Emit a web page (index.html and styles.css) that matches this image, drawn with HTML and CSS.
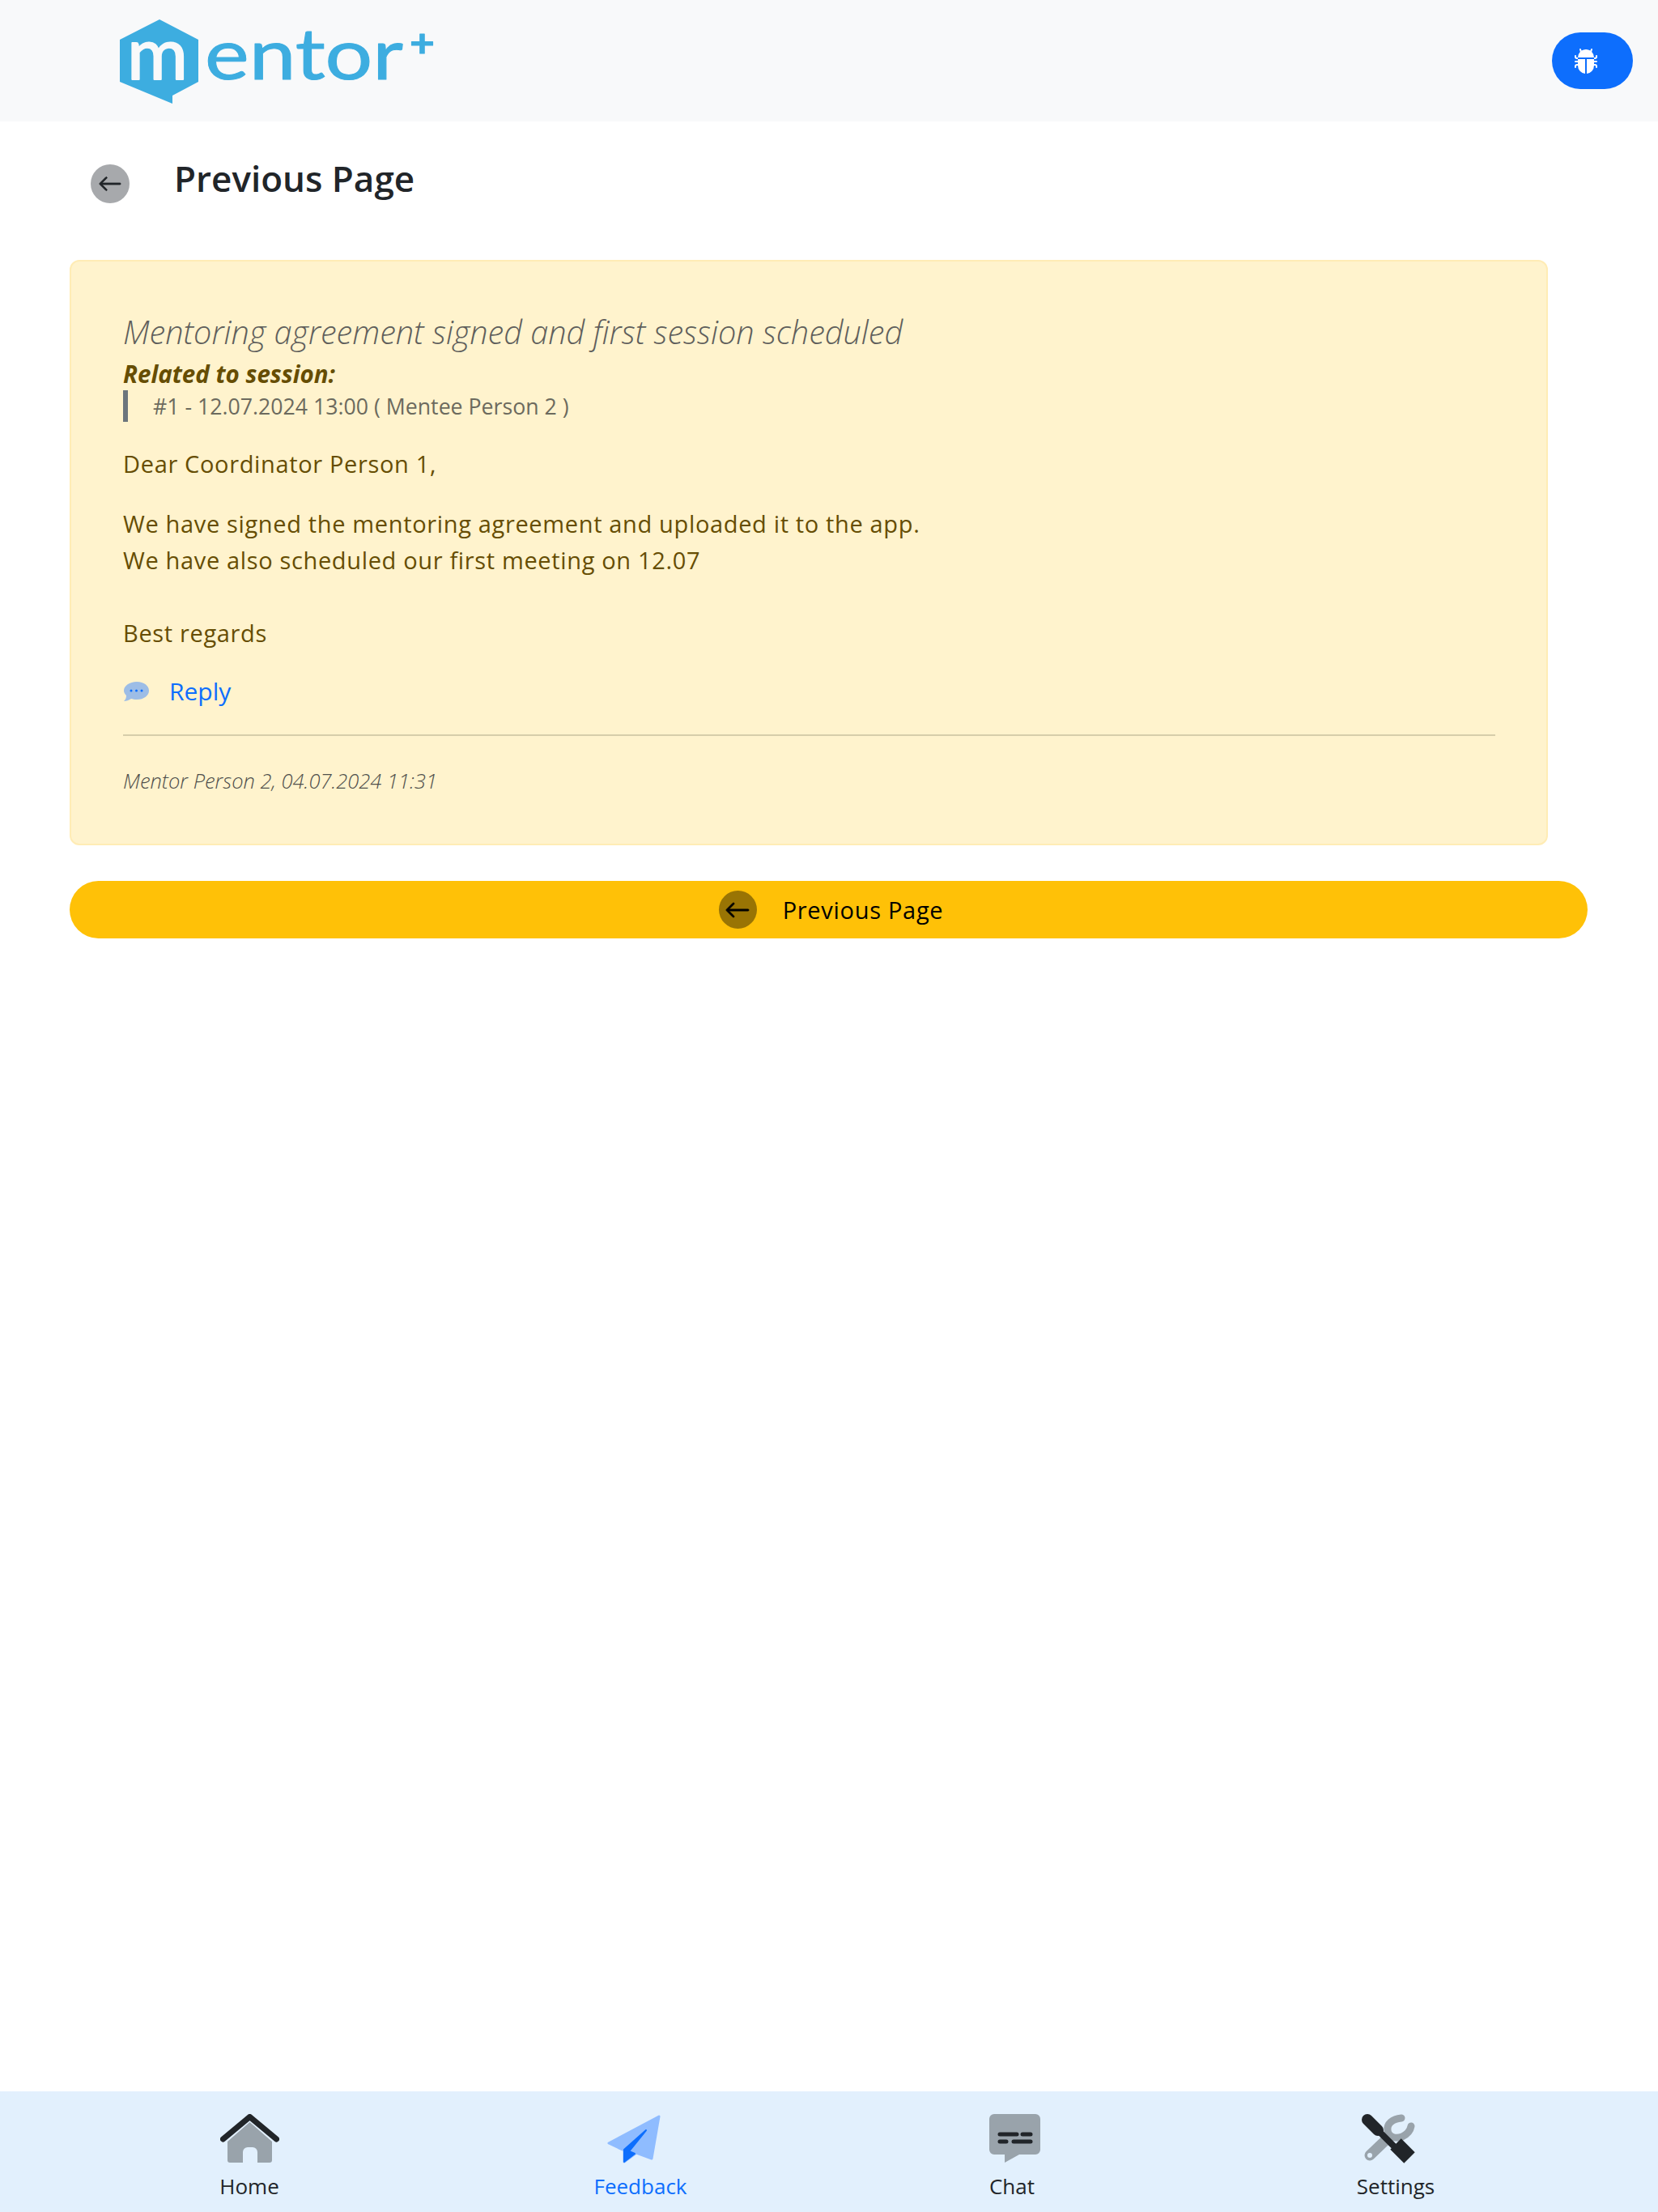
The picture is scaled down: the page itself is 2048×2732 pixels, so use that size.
FILE: index.html
```html
<!DOCTYPE html>
<html lang="en">
<head>
    <meta charset="UTF-8">
    <title>Mentor+ Feedback</title>
    <link rel="stylesheet" href="styles.css">
</head>
<body>

<header class="top-bar">
    <svg class="logo" viewBox="0 0 388 105" width="388" height="105">
        <path class="logo-hex" d="M49 1 L0 26 V78 L65 105 V95 L97 78 V26 Z"/>
        <text class="logo-m" x="9" y="75" textLength="75" lengthAdjust="spacingAndGlyphs">m</text>
        <text class="logo-word" x="105" y="75" textLength="245" lengthAdjust="spacingAndGlyphs">entor</text>
        <text class="logo-plus" x="358" y="47" textLength="31" lengthAdjust="spacingAndGlyphs">+</text>
    </svg>
    <button class="bug-button">
        <svg viewBox="0 0 16 16" width="32" height="32" fill="#fff">
            <path d="M4.978.855a.5.5 0 1 0-.956.29l.41 1.352A4.985 4.985 0 0 0 3 6h10a4.985 4.985 0 0 0-1.432-3.503l.41-1.352a.5.5 0 1 0-.956-.29l-.291.956A4.978 4.978 0 0 0 8 1a4.979 4.979 0 0 0-2.731.811l-.29-.956z"/>
            <path d="M13 6v1H8.5v8.975A5 5 0 0 0 13 11h.5a.5.5 0 0 1 .5.5v.5a.5.5 0 1 0 1 0v-.5a1.5 1.5 0 0 0-1.5-1.5H13V9h1.5a.5.5 0 0 0 0-1H13V7h.5A1.5 1.5 0 0 0 15 5.5V5a.5.5 0 0 0-1 0v.5a.5.5 0 0 1-.5.5H13zm-5.5 9.975V7H3V6h-.5a.5.5 0 0 1-.5-.5V5a.5.5 0 0 0-1 0v.5A1.5 1.5 0 0 0 2.5 7H3v1H1.5a.5.5 0 0 0 0 1H3v1h-.5A1.5 1.5 0 0 0 1 11.5v.5a.5.5 0 1 0 1 0v-.5a.5.5 0 0 1 .5-.5H3a5 5 0 0 0 4.5 4.975z"/>
        </svg>
    </button>
</header>

<main class="page">
    <div class="back-row">
        <span class="back-circle">
            <svg viewBox="0 0 16 16" width="30" height="30" fill="#212529">
                <path d="M15 8a.5.5 0 0 0-.5-.5H2.707l3.147-3.146a.5.5 0 1 0-.708-.708l-4 4a.5.5 0 0 0 0 .708l4 4a.5.5 0 0 0 .708-.708L2.707 8.5H14.5A.5.5 0 0 0 15 8z" stroke="#212529" stroke-width="0.5"/>
            </svg>
        </span>
        <h1 class="back-title">Previous Page</h1>
    </div>

    <section class="message-card">
        <h2 class="message-title">Mentoring agreement signed and first session scheduled</h2>
        <div class="related-label">Related to session:</div>
        <div class="related-quote">#1 - 12.07.2024 13:00 ( Mentee Person 2 )</div>
        <p class="message-text">Dear Coordinator Person 1,</p>
        <p class="message-text">We have signed the mentoring agreement and uploaded it to the app.<br>We have also scheduled our first meeting on 12.07<br><br>Best regards</p>
        <div class="reply-row">
            <svg viewBox="0 0 32 26" width="32" height="26">
                <path d="M17 1 C26 1 32 6 32 12 C32 18 26 23 17 23 C14 23 12 22.500 10 22 C7 24 4 25 1 25 C3 23 4 21 4 18 C2 16 1 14 1 12 C1 6 8 1 17 1 Z" fill="#9dbde6"/>
                <circle cx="10" cy="12" r="1.500" fill="#0d6efd"/>
                <circle cx="16.500" cy="12" r="1.500" fill="#0d6efd"/>
                <circle cx="23" cy="12" r="1.500" fill="#0d6efd"/>
            </svg>
            <a class="reply-link">Reply</a>
        </div>
        <hr class="message-rule">
        <div class="message-meta">Mentor Person 2, 04.07.2024 11:31</div>
    </section>

    <button class="previous-button">
        <span class="previous-circle">
            <svg viewBox="0 0 16 16" width="32" height="32" fill="#000">
                <path d="M15 8a.5.5 0 0 0-.5-.5H2.707l3.147-3.146a.5.5 0 1 0-.708-.708l-4 4a.5.5 0 0 0 0 .708l4 4a.5.5 0 0 0 .708-.708L2.707 8.5H14.5A.5.5 0 0 0 15 8z" stroke="#000" stroke-width="0.5"/>
            </svg>
        </span>
        <span>Previous Page</span>
    </button>
</main>

<nav class="bottom-nav">
    <div class="nav-item">
        <svg viewBox="0 0 73 61" width="73" height="61">
            <path d="M9 34 L36.500 10 L64 34 V57 a3 3 0 0 1-3 3 H46 V47 a6 6 0 0 0-6-6 h-6 a6 6 0 0 0-6 6 V60 H12 a3 3 0 0 1-3-3 Z" fill="#99a3ab"/>
            <path d="M3.500 31 L36.500 3.500 L69.500 31" fill="none" stroke="#212529" stroke-width="7" stroke-linecap="round" stroke-linejoin="round"/>
        </svg>
        <span>Home</span>
    </div>
    <div class="nav-item nav-active">
        <svg class="icon-left" viewBox="0 0 66 61" width="66" height="61">
            <path d="M64 3 L2 36 L21 45 V59 L36 48 L55 55 Z" fill="#8fbcff" stroke="#8fbcff" stroke-width="3" stroke-linejoin="round"/>
            <path d="M48 20 L21 44 V59 L34 49 L27 46 Z" fill="#0d6efd" stroke="#0d6efd" stroke-width="2" stroke-linejoin="round"/>
        </svg>
        <span>Feedback</span>
    </div>
    <div class="nav-item">
        <svg class="icon-right" viewBox="0 0 65 61" width="65" height="61">
            <path d="M7 0 H58 a6 6 0 0 1 6 6 V44 a6 6 0 0 1-6 6 H38 L20 60 V50 H7 a6 6 0 0 1-6-6 V6 a6 6 0 0 1 6-6 Z" fill="#99a3ab"/>
            <path d="M14 25 H35 M42 25 H52 M14 34 H22 M31 34 H52" fill="none" stroke="#212529" stroke-width="5" stroke-linecap="round"/>
        </svg>
        <span>Chat</span>
    </div>
    <div class="nav-item">
        <svg class="icon-left" viewBox="0 0 68 61" width="68" height="61">
            <path d="M49 5 C38 6 31 12 32 20 C33 29 42 31 50 28 C56 25 60 21 61 15" fill="none" stroke="#99a3ab" stroke-width="9" stroke-linecap="round"/>
            <path d="M32 30 L10 51" fill="none" stroke="#99a3ab" stroke-width="13" stroke-linecap="round"/>
            <circle cx="10" cy="51" r="3" fill="#e2f0fd"/>
            <path d="M7 7 L20 20" fill="none" stroke="#212529" stroke-width="14" stroke-linecap="round"/>
            <path d="M18 18 L42 42" fill="none" stroke="#212529" stroke-width="8"/>
            <path d="M42 37 L59 54" fill="none" stroke="#212529" stroke-width="19" stroke-linejoin="round"/>
        </svg>
        <span>Settings</span>
    </div>
</nav>

</body>
</html>
```

FILE: styles.css
```css
* {
    box-sizing: border-box;
    margin: 0;
    padding: 0;
}

html, body {
    height: 100%;
    overflow: hidden;
}

body {
    display: flex;
    flex-direction: column;
    height: 100vh;
    font-family: 'Open Sans', 'Noto Sans', sans-serif;
    background: #fff;
    color: #212529;
}

/* Header */
.top-bar {
    display: flex;
    justify-content: space-between;
    align-items: center;
    height: 150px;
    padding: 0 31px 0 148px;
    background-color: #f8f9fa;
}

.logo {
    overflow: visible;
}

.logo-hex {
    fill: #3dade0;
}

.logo-m, .logo-word, .logo-plus {
    font-family: 'Lato', sans-serif;
    stroke-linejoin: round;
}

.logo-m {
    font-size: 90px;
    fill: #f8f9fa;
    stroke: #f8f9fa;
    stroke-width: 2px;
}

.logo-word {
    font-size: 88px;
    fill: #3dade0;
    stroke: #3dade0;
    stroke-width: 1px;
}

.logo-plus {
    font-size: 48px;
    font-weight: 700;
    fill: #3dade0;
    stroke: #3dade0;
    stroke-width: 1px;
}

.bug-button {
    display: flex;
    align-items: center;
    width: 100px;
    height: 70px;
    padding-left: 26px;
    border: none;
    border-radius: 35px;
    background-color: #0d6efd;
}

/* Page body */
.page {
    flex: 1;
    padding: 53px 87px 0 86px;
}

.back-row {
    display: flex;
    align-items: center;
    gap: 55px;
    height: 48px;
    padding-left: 26px;
    margin-bottom: 70px;
}

.back-circle {
    display: flex;
    justify-content: center;
    align-items: center;
    width: 48px;
    height: 48px;
    border-radius: 50%;
    background-color: #a7a9ac;
}

.back-title {
    margin-bottom: 14px;
    font-size: 44px;
    font-weight: 600;
    line-height: 48px;
}

.message-card {
    width: 1826px;
    padding: 64px 63px 59px 64px;
    border: 2px solid #ffecb5;
    border-radius: 12px;
    background-color: #fff3cd;
    color: #664d03;
}

.message-title {
    font-size: 39.7px;
    font-weight: 300;
    font-style: italic;
    line-height: 46px;
    color: #5f5f5c;
}

.related-label {
    margin-top: 10px;
    margin-bottom: 1px;
    font-size: 29.5px;
    font-weight: 700;
    font-style: italic;
    line-height: 38px;
}

.related-quote {
    padding-left: 31px;
    border-left: 6px solid #6c757d;
    font-size: 26.7px;
    line-height: 39px;
    color: #6c6a5e;
}

.message-text {
    margin-top: 29px;
    font-size: 29px;
    letter-spacing: 0.65px;
    line-height: 45px;
}

.reply-row {
    display: flex;
    align-items: center;
    gap: 25px;
    height: 45px;
    margin-top: 27px;
}

.reply-link {
    font-size: 30px;
    color: #0d6efd;
}

.message-rule {
    margin: 31px 0 36px;
    border: none;
    border-top: 2px solid #d6cdaa;
}

.message-meta {
    font-size: 25.5px;
    font-style: italic;
    font-weight: 300;
    line-height: 38px;
    color: #4f4f4c;
}

.previous-button {
    display: flex;
    justify-content: center;
    align-items: center;
    gap: 32px;
    width: 100%;
    height: 71px;
    margin-top: 44px;
    padding-left: 6px;
    border: none;
    border-radius: 36px;
    background-color: #ffc107;
    font-family: inherit;
    font-size: 29px;
    letter-spacing: 0.7px;
    color: #000;
}

.previous-circle {
    display: flex;
    justify-content: center;
    align-items: center;
    width: 47px;
    height: 47px;
    border-radius: 50%;
    background-color: #997404;
}

/* Bottom nav */
.bottom-nav {
    display: grid;
    grid-template-columns: 616px 350px 568px 380px;
    height: 149px;
    padding-top: 28px;
    background-color: #e2f0fd;
}

.nav-item {
    display: flex;
    flex-direction: column;
    align-items: center;
    gap: 10px;
    font-size: 26px;
    line-height: 36px;
}

.nav-active {
    color: #0d6efd;
}

/* icons sit a little off the label centre */
.icon-left {
    margin-right: 16px;
}

.icon-right {
    margin-left: 6px;
}
```
